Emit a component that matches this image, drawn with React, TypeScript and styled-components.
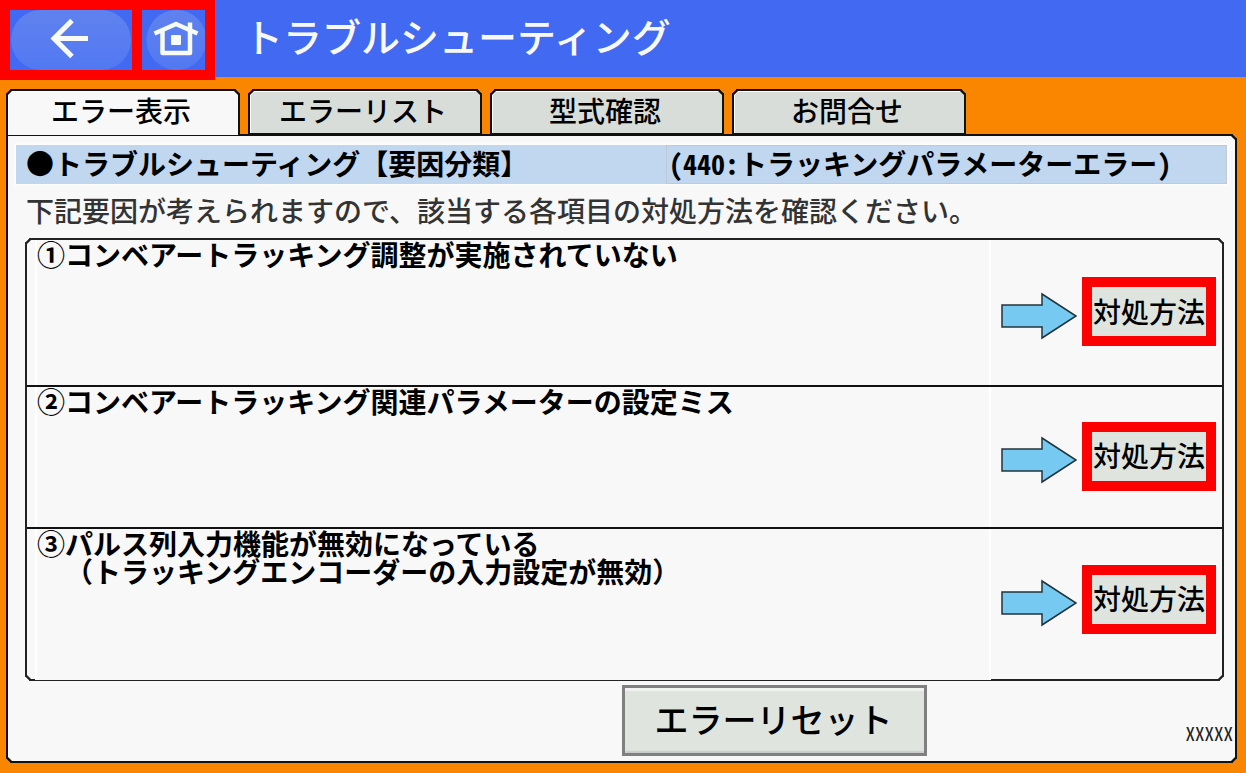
import React from "react";
import styled, { createGlobalStyle, css } from "styled-components";

const GlobalStyle = createGlobalStyle`
  *, *::before, *::after { box-sizing: border-box; }
  body {
    margin: 0;
    background: #fa8600;
    color: #000;
    font-family: "Noto Sans CJK JP", sans-serif;
    font-size: 28px;
    font-weight: 500;
    line-height: 28px;
    text-spacing-trim: space-all;
  }
  button { font: inherit; color: inherit; cursor: pointer; }
`;

const bevel = css`
  corner-shape: bevel;
`;

const Screen = styled.div`
  display: flex;
  flex-direction: column;
  min-height: 100vh;
`;

const Header = styled.header`
  position: relative;
  display: flex;
  align-items: flex-start;
  height: 77px;
  background: #4169f1;
`;

const NavButton = styled.button`
  flex: none;
  height: 80px;
  padding: 0;
  border: 10px solid #f00;
  background: #4169f1;

  & + & {
    margin-left: -10px;
  }

  svg {
    display: block;
  }
`;

const Title = styled.h1`
  margin: 0 0 0 29px;
  color: #f8f8f8;
  font-size: 39px;
  font-weight: 500;
  line-height: 70px;
  white-space: nowrap;
`;

const Body = styled.main`
  display: flex;
  flex: 1;
  flex-direction: column;
  padding: 12px 9px 10px 6px;
`;

const TabBar = styled.nav`
  display: flex;
  gap: 8px;
  position: relative;
`;

const Tab = styled.button<{ $active?: boolean }>`
  flex: 0 1 234px;
  height: 46px;
  padding: 0 4px ${(p) => (p.$active ? 6 : 4)}px 0;
  border: 2px solid #111;
  border-bottom-width: ${(p) => (p.$active ? 0 : 2)}px;
  border-radius: 5px 5px 0 0;
  ${bevel}
  background: ${(p) => (p.$active ? "#f8f8f8" : "#d9ddd9")};
  box-shadow: inset 1px 1px 0 #fff;
  line-height: 38px;
  white-space: nowrap;
`;

const Panel = styled.section`
  display: flex;
  flex: 1;
  flex-direction: column;
  margin-top: -1px;
  padding: 9px 2px 5px 8px;
  border: 2px solid #111;
  border-radius: 0 5px 5px 5px;
  ${bevel}
  background: #f8f8f8;
`;

const Band = styled.div`
  display: grid;
  grid-template-columns: 650fr 561fr;
  height: 39px;
  margin-right: 6px;
  background: #c0d7ef;
  box-shadow: 0 0 0 2px #fcfcfc;
  font-weight: 700;
  line-height: 37px;
  white-space: nowrap;
`;

const BandTitle = styled.h2`
  margin: 0;
  padding-left: 10px;
  font-size: 28px;
`;

const BandCode = styled.div`
  padding-left: 2px;
  border: 1px solid #c4c8d2;
  line-height: 35px;
`;

const HalfWidth = styled.span`
  font-feature-settings: "hwid";
`;

const Lead = styled.p`
  margin: 0;
  padding: 0 0 2px 10px;
  color: #333;
  line-height: 52px;
`;

const CauseList = styled.ol`
  display: grid;
  grid-template-rows: minmax(145px, auto) minmax(142px, auto) minmax(152px, auto);
  margin: 0 9px 0 9px;
  padding: 0;
  border: 2px solid #222;
  border-radius: 5px;
  ${bevel}
  list-style: none;
`;

const CauseText = styled.div`
  margin-left: 8px;
  border: solid #fff;
  border-width: 0 2px;
  background: #f8f8f8;
  font-weight: 700;
  white-space: pre-line;
`;

const CauseAction = styled.div`
  display: flex;
  align-items: center;
  gap: 5px;
  padding: 0 0 2px 10px;

  svg {
    flex: none;
    margin-top: 8px;
  }
`;

const Cause = styled.li`
  display: grid;
  grid-template-columns: 1fr 231px;

  & + & {
    border-top: 2px solid #111;
  }

  &:last-child ${CauseText} {
    margin-bottom: -1px;
  }

  &:last-child ${CauseAction} {
    padding-bottom: 10px;
  }
`;

const ActionButton = styled.button`
  flex: none;
  width: 134px;
  height: 69px;
  padding: 0 0 2px;
  border: 10px solid #f00;
  background: #dfe4df;
  line-height: 46px;
  white-space: nowrap;
`;

const Footer = styled.footer`
  display: grid;
  grid-template-columns: 99fr auto 50fr;
  align-items: center;
  margin-top: 4px;
`;

const ResetButton = styled.button`
  grid-column: 2;
  width: 305px;
  height: 71px;
  padding: 0 2px 4px 0;
  border: 3px solid #808080;
  background: #dfe4df;
  box-shadow: inset 0 3px 1px #f1f3f0, inset 0 -2px 1px #c8ccc8;
  font-size: 34px;
  line-height: 60px;
`;

const Version = styled.small`
  padding-top: 24px;
  color: #222;
  font-size: 19px;
  font-weight: 400;
  font-feature-settings: "hwid";
  text-align: right;
`;

const BackIcon = () => (
  <svg width="122" height="60" viewBox="0 0 122 60" aria-hidden="true">
    <defs>
      <linearGradient id="pill" x1="0" y1="0" x2="0" y2="1">
        <stop offset="0" stopColor="#6082ef" />
        <stop offset="1" stopColor="#5278f2" />
      </linearGradient>
    </defs>
    <rect x="1" y="0" width="120" height="60" rx="30" fill="url(#pill)" />
    <path d="M62 10.500L44 28.500L62 46.500M44 28.500H78" fill="none" stroke="#f8faf5" strokeWidth="5" />
  </svg>
);

const HomeIcon = () => (
  <svg width="63" height="60" viewBox="0 0 63 60" aria-hidden="true">
    <circle cx="34.500" cy="30" r="30" fill="url(#pill)" />
    <g fill="none" stroke="#f8faf5" strokeWidth="4.500" strokeLinejoin="round">
      <path d="M12.500 23.500L34 14L55.500 23.500" />
      <path d="M48 12.500V20" />
      <path d="M20.500 21V43H48V21" />
    </g>
    <rect x="29" y="25" width="10" height="10" rx="1" fill="#f8faf5" />
  </svg>
);

const ArrowIcon = () => (
  <svg width="76" height="48" viewBox="0 0 76 48" aria-hidden="true">
    <path d="M1 13H41V2L75 24L41 46V35H1Z" fill="#76caf1" stroke="#22343c" strokeWidth="1.500" />
  </svg>
);

const tabs = ["エラー表示", "エラーリスト", "型式確認", "お問合せ"];

const causes = [
  "①コンベアートラッキング調整が実施されていない",
  "②コンベアートラッキング関連パラメーターの設定ミス",
  "③パルス列入力機能が無効になっている\n　（トラッキングエンコーダーの入力設定が無効）",
];

export default function App() {
  return (
    <Screen>
      <GlobalStyle />
      <Header>
        <NavButton type="button" aria-label="戻る">
          <BackIcon />
        </NavButton>
        <NavButton type="button" aria-label="ホーム">
          <HomeIcon />
        </NavButton>
        <Title>トラブルシューティング</Title>
      </Header>
      <Body>
        <TabBar>
          {tabs.map((label, i) => (
            <Tab key={label} type="button" $active={i === 0}>
              {label}
            </Tab>
          ))}
        </TabBar>
        <Panel>
          <Band>
            <BandTitle>●トラブルシューティング【要因分類】</BandTitle>
            <BandCode>
              <HalfWidth>(440:</HalfWidth>トラッキングパラメーターエラー<HalfWidth>)</HalfWidth>
            </BandCode>
          </Band>
          <Lead>下記要因が考えられますので、該当する各項目の対処方法を確認ください。</Lead>
          <CauseList>
            {causes.map((cause) => (
              <Cause key={cause}>
                <CauseText>{cause}</CauseText>
                <CauseAction>
                  <ArrowIcon />
                  <ActionButton type="button">対処方法</ActionButton>
                </CauseAction>
              </Cause>
            ))}
          </CauseList>
          <Footer>
            <ResetButton type="button">エラーリセット</ResetButton>
            <Version>XXXXX</Version>
          </Footer>
        </Panel>
      </Body>
    </Screen>
  );
}
